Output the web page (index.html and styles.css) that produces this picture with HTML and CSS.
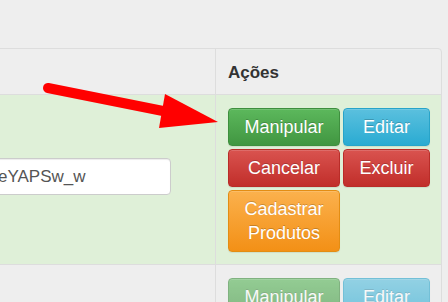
FILE: index.html
```html
<!DOCTYPE html>
<html lang="pt-BR">
<head>
    <meta charset="UTF-8">
    <meta name="viewport" content="width=device-width, initial-scale=1.0">
    <title>Pedidos</title>
    <link rel="stylesheet" href="styles.css">
</head>
<body>

    <div class="panel">
        <div class="row head">
            <div class="cell"></div>
            <div class="cell actions-col">Ações</div>
        </div>

        <div class="row success">
            <div class="cell field-cell">
                <input type="text" class="form-control" value="eYAPSw_w" readonly>
            </div>
            <div class="cell actions-col">
                <div class="btn-grid">
                    <button class="btn btn-success">Manipular</button>
                    <button class="btn btn-info">Editar</button>
                    <button class="btn btn-danger">Cancelar</button>
                    <button class="btn btn-danger">Excluir</button>
                    <button class="btn btn-warning">Cadastrar Produtos</button>
                </div>
            </div>
        </div>

        <div class="row faded">
            <div class="cell"></div>
            <div class="cell actions-col">
                <div class="btn-grid">
                    <button class="btn btn-success">Manipular</button>
                    <button class="btn btn-info">Editar</button>
                </div>
            </div>
        </div>
    </div>

    <!-- red annotation arrow pointing at the first button -->
    <svg class="arrow" width="230" height="140" viewBox="0 0 230 140">
        <line x1="48" y1="88" x2="168" y2="112" stroke="#ff0000" stroke-width="10" stroke-linecap="round"/>
        <polygon points="165,94 218,122 159,128" fill="#ff0000"/>
    </svg>

</body>
</html>
```

FILE: styles.css
```css
* {
    box-sizing: border-box;
}

body {
    margin: 0;
    background-color: #eeeeee;
    font-family: "Liberation Sans", Arial, sans-serif;
    color: #333333;
    overflow: hidden;
}

.panel {
    margin: 48px 0 0 -20px;
    width: 462px;
    border: 1px solid #dddddd;
    border-radius: 4px;
}

.row {
    display: grid;
    grid-template-columns: 234px 1fr;
    border-top: 1px solid #dddddd;
}

.row.head {
    border-top: none;
}

.cell + .cell {
    border-left: 1px solid #dddddd;
}

.head .cell {
    height: 45px;
    padding: 13px 12px 11px;
    font-size: 17px;
    font-weight: bold;
    line-height: 21px;
}

.success {
    background-color: #dff0d8;
}

.actions-col {
    padding: 13px 12px 12px;
}

.faded {
    height: 60px;
}

.faded .btn {
    opacity: 0.62;
}

.field-cell {
    padding: 63px 12px 0 7px;
}

.form-control {
    display: block;
    width: 183px;
    height: 37px;
    padding: 6px 9px;
    font-family: "Liberation Sans", Arial, sans-serif;
    font-size: 17px;
    color: #555555;
    background-color: #ffffff;
    border: 1px solid #cccccc;
    border-radius: 4px;
    box-shadow: inset 0 1px 1px rgba(0, 0, 0, 0.075);
    outline: none;
}

.btn-grid {
    display: grid;
    grid-template-columns: 112px 87px;
    gap: 3px;
    align-items: start;
}

.btn {
    padding: 6px 6px;
    font-family: "Liberation Sans", Arial, sans-serif;
    font-size: 18px;
    line-height: 24px;
    color: #ffffff;
    border: 1px solid transparent;
    border-radius: 4px;
    text-shadow: 0 -1px 0 rgba(0, 0, 0, 0.2);
    box-shadow: inset 0 1px 0 rgba(255, 255, 255, 0.15), 0 1px 1px rgba(0, 0, 0, 0.075);
    cursor: pointer;
}

.btn-success {
    background-image: linear-gradient(to bottom, #5cb85c 0, #419641 100%);
    border-color: #3e8f3e;
}

.btn-info {
    background-image: linear-gradient(to bottom, #5bc0de 0, #2aabd2 100%);
    border-color: #28a4c9;
}

.btn-danger {
    background-image: linear-gradient(to bottom, #d9534f 0, #c12e2a 100%);
    border-color: #b92c28;
}

.btn-warning {
    background-image: linear-gradient(to bottom, #fbb14d 0, #f39016 100%);
    border-color: #e38d13;
}

.arrow {
    position: absolute;
    top: 0;
    left: 0;
    pointer-events: none;
}
```
